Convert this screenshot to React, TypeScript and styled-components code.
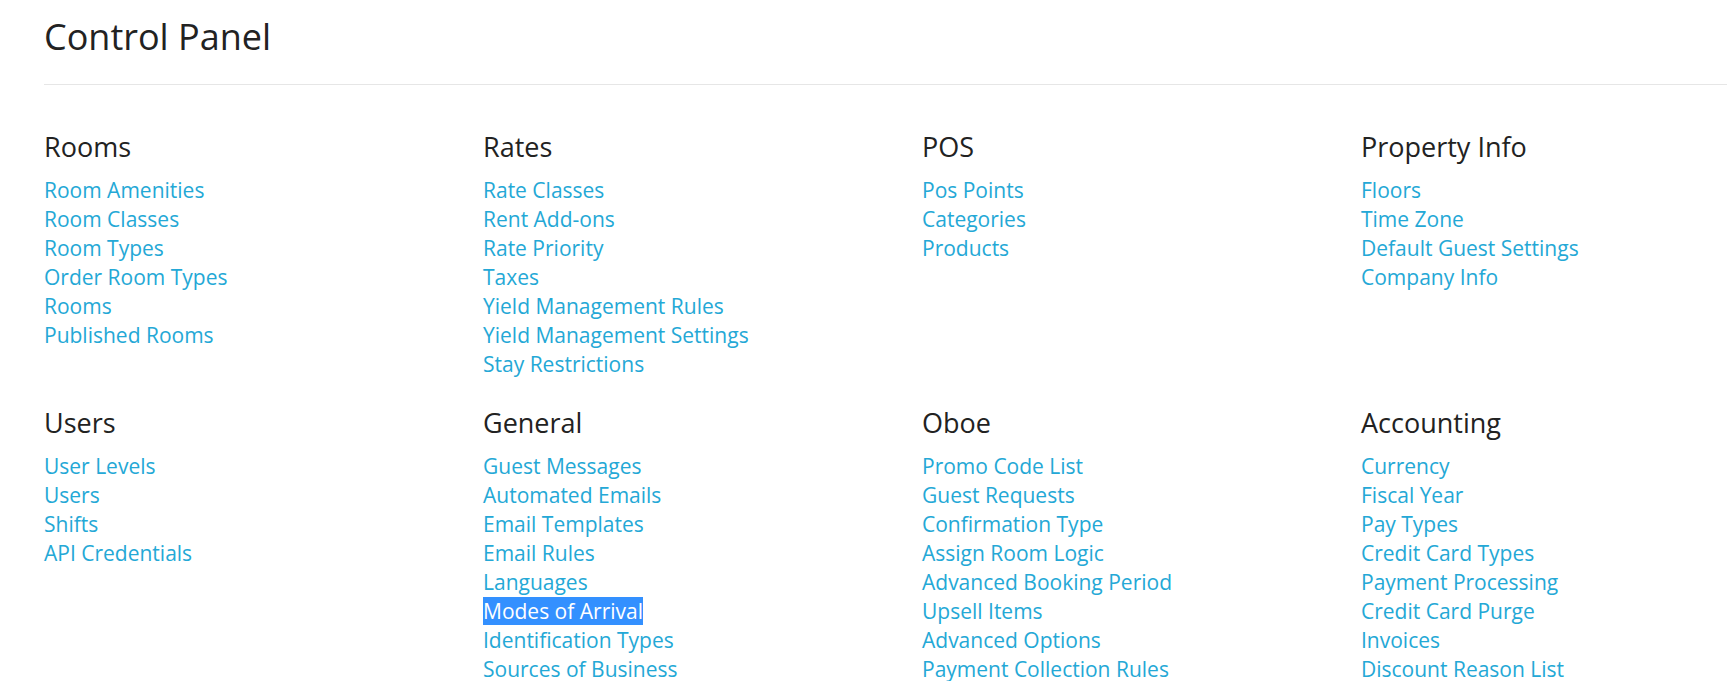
import React from "react";
import styled, { createGlobalStyle } from "styled-components";

const Global = createGlobalStyle`
  html, body { margin: 0; padding: 0; background: #fff; }
  body { font-family: "Open Sans", "Liberation Sans", sans-serif; color: #222; overflow: hidden; }
`;

const Page = styled.div`
  padding: 0 0 0 44px;
`;

const Title = styled.h1`
  margin: 0;
  padding-top: 13px;
  font-size: 36px;
  font-weight: 400;
  line-height: 48px;
  color: #222;
`;

const Rule = styled.hr`
  margin: 23px 0 0 0;
  border: 0;
  border-top: 1px solid #e6e6e6;
`;

const Grid = styled.div`
  display: grid;
  grid-template-columns: repeat(4, 439px);
  row-gap: 26px;
  padding-top: 44px;
`;

const Section = styled.section`
  display: flex;
  flex-direction: column;
`;

const Heading = styled.h2`
  margin: 0 0 11px 0;
  font-size: 27px;
  font-weight: 400;
  line-height: 36px;
  color: #222;
`;

const LinkList = styled.ul`
  list-style: none;
  margin: 0;
  padding: 0;
`;

const Item = styled.li`
  font-size: 21px;
  line-height: 29px;
`;

const Link = styled.a<{ $selected?: boolean }>`
  color: ${(p) => (p.$selected ? "#fff" : "#24a8d6")};
  background: ${(p) => (p.$selected ? "#3390ff" : "transparent")};
  text-decoration: none;
`;

type Group = { title: string; links: string[]; selected?: string };

const groups: Group[] = [
  { title: "Rooms", links: ["Room Amenities", "Room Classes", "Room Types", "Order Room Types", "Rooms", "Published Rooms"] },
  { title: "Rates", links: ["Rate Classes", "Rent Add-ons", "Rate Priority", "Taxes", "Yield Management Rules", "Yield Management Settings", "Stay Restrictions"] },
  { title: "POS", links: ["Pos Points", "Categories", "Products"] },
  { title: "Property Info", links: ["Floors", "Time Zone", "Default Guest Settings", "Company Info"] },
  { title: "Users", links: ["User Levels", "Users", "Shifts", "API Credentials"] },
  {
    title: "General",
    links: ["Guest Messages", "Automated Emails", "Email Templates", "Email Rules", "Languages", "Modes of Arrival", "Identification Types", "Sources of Business"],
    selected: "Modes of Arrival",
  },
  { title: "Oboe", links: ["Promo Code List", "Guest Requests", "Confirmation Type", "Assign Room Logic", "Advanced Booking Period", "Upsell Items", "Advanced Options", "Payment Collection Rules"] },
  { title: "Accounting", links: ["Currency", "Fiscal Year", "Pay Types", "Credit Card Types", "Payment Processing", "Credit Card Purge", "Invoices", "Discount Reason List"] },
];

export default function App() {
  return (
    <>
      <Global />
      <Page>
        <Title>Control Panel</Title>
        <Rule />
        <Grid>
          {groups.map((g) => (
            <Section key={g.title}>
              <Heading>{g.title}</Heading>
              <LinkList>
                {g.links.map((l) => (
                  <Item key={l}>
                    <Link href="#" $selected={g.selected === l}>{l}</Link>
                  </Item>
                ))}
              </LinkList>
            </Section>
          ))}
        </Grid>
      </Page>
    </>
  );
}
